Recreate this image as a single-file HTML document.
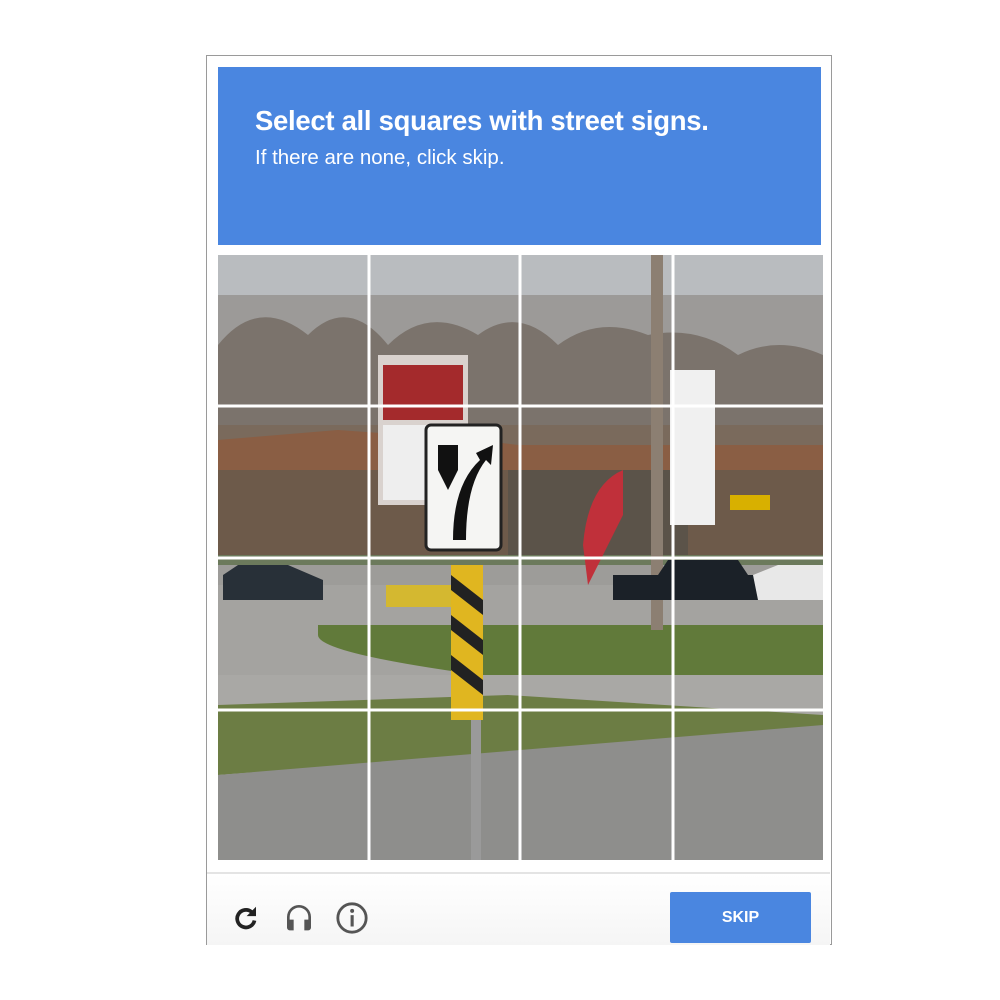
<!DOCTYPE html>
<html><head><style>
body{margin:0;background:#fff;width:1000px;height:1000px;position:relative;font-family:"Liberation Sans",Arial,sans-serif;overflow:hidden}
.box{position:absolute;left:206px;top:55px;width:624px;height:888px;border:1px solid #9a9a9a;background:#fff}
.hdr{position:absolute;left:218px;top:67px;width:603px;height:178px;background:#4a86e0;color:#fff}
.h1{position:absolute;left:37px;top:38px;font-size:27.5px;font-weight:bold;letter-spacing:-0.3px}
.h2{position:absolute;left:37px;top:79px;font-size:20.5px}
.img{position:absolute;left:218px;top:255px;width:605px;height:605px}
.bar{position:absolute;left:207px;top:872px;width:623px;height:71px;border-top:2px solid #e4e4e4;background:linear-gradient(#fff,#f5f5f5)}
.skip{position:absolute;left:670px;top:892px;width:141px;height:51px;background:#4a86e0;color:#fff;font-weight:bold;font-size:16px;text-align:center;line-height:51px;border-radius:2px}
</style></head><body>
<div class="box"></div>
<div class="hdr"><div class="h1">Select all squares with <span>street signs</span>.</div><div class="h2">If there are none, click skip.</div></div>
<svg class="img" viewBox="0 0 605 605" width="605" height="605">
<rect width="605" height="605" fill="#b9bcbf"/>
<rect y="40" width="605" height="150" fill="#9c9a98"/>
<path d="M0 90 Q40 40 90 80 Q130 40 170 90 Q210 50 260 80 Q300 50 340 90 Q380 60 430 80 Q480 70 520 100 Q560 80 605 100 V200 H0Z" fill="#7b736c"/>
<rect y="170" width="605" height="40" fill="#7a6a5c"/>
<path d="M0 185 L120 175 L260 185 L300 190 L605 190 V220 H0Z" fill="#8a5e44"/>
<rect y="215" width="605" height="85" fill="#6d5a4a"/>
<rect x="290" y="215" width="180" height="85" fill="#5b5349"/>
<rect y="300" width="605" height="30" fill="#6c7a5c"/>
<rect y="310" width="605" height="110" fill="#9d9c99"/>
<path d="M0 330 H605 V420 H0Z" fill="#a4a3a0"/>
<path d="M100 370 H605 V425 H300 Q100 400 100 380Z" fill="#617a3a"/>
<path d="M0 420 H605 V470 L0 480Z" fill="#a9a8a5"/>
<path d="M0 450 L290 440 L605 460 V475 L0 520Z" fill="#6c7d44"/>
<path d="M0 520 L605 470 V605 H0Z" fill="#8e8e8c"/>
<rect x="160" y="100" width="90" height="150" fill="#d9d2ce"/>
<rect x="165" y="110" width="80" height="55" fill="#a42a2c"/>
<rect x="165" y="170" width="45" height="75" fill="#eeeeee"/>
<rect x="208" y="170" width="75" height="125" fill="#f5f5f3" stroke="#222" stroke-width="3" rx="5"/>
<path d="M220 190 H240 V215 L230 235 L220 215Z" fill="#111"/>
<path d="M235 285 Q235 230 262 205 L258 198 L275 190 L273 210 L268 205 Q248 230 248 285Z" fill="#111"/>
<rect x="168" y="330" width="70" height="22" fill="#d4b830"/>
<rect x="233" y="310" width="32" height="155" fill="#e0b620"/>
<path d="M233 320 L265 345 V360 L233 335Z M233 360 L265 385 V400 L233 375Z M233 400 L265 425 V440 L233 415Z" fill="#222"/>
<rect x="253" y="465" width="10" height="140" fill="#9a9a9a"/>
<rect x="433" y="0" width="12" height="375" fill="#8c7f72"/>
<rect x="452" y="115" width="45" height="155" fill="#f0f0f0"/>
<path d="M365 290 Q370 230 405 215 V260 L370 330Z" fill="#c0303a"/>
<path d="M395 320 H440 L450 305 H520 L530 320 H560 V345 H395Z" fill="#1b2128"/>
<path d="M535 320 L560 310 H605 V345 H540Z" fill="#e8e8e8"/>
<path d="M5 320 L20 310 H70 L105 325 V345 H5Z" fill="#283038"/>
<rect x="512" y="240" width="40" height="15" fill="#d8b000"/>
<g stroke="#fff" stroke-width="3"><line x1="151" y1="0" x2="151" y2="605"/><line x1="302" y1="0" x2="302" y2="605"/><line x1="455" y1="0" x2="455" y2="605"/><line x1="0" y1="151" x2="605" y2="151"/><line x1="0" y1="303" x2="605" y2="303"/><line x1="0" y1="455" x2="605" y2="455"/></g>
</svg>
<div class="bar"></div>
<svg style="position:absolute;left:231px;top:903px" width="30" height="30" viewBox="0 0 24 24"><path d="M16.5 7.2A7 7 0 1 0 18.8 14" fill="none" stroke="#222" stroke-width="3"/><path d="M12.5 10.5H20V3z" fill="#222"/></svg>
<svg style="position:absolute;left:283px;top:900px" width="32" height="34" viewBox="0 0 24 24"><path d="M3 14v6a2 2 0 0 0 2 2h3v-8H5v-2a7 7 0 0 1 14 0v2h-3v8h3a2 2 0 0 0 2-2v-6 -2a9 9 0 0 0-18 0z" fill="#555"/></svg>
<svg style="position:absolute;left:335px;top:901px" width="34" height="34" viewBox="0 0 24 24"><circle cx="12" cy="12" r="10" fill="none" stroke="#555" stroke-width="2"/><rect x="11" y="10" width="2.2" height="8" fill="#555"/><circle cx="12.1" cy="7" r="1.4" fill="#555"/></svg>
<div class="skip">SKIP</div>
</body></html>
